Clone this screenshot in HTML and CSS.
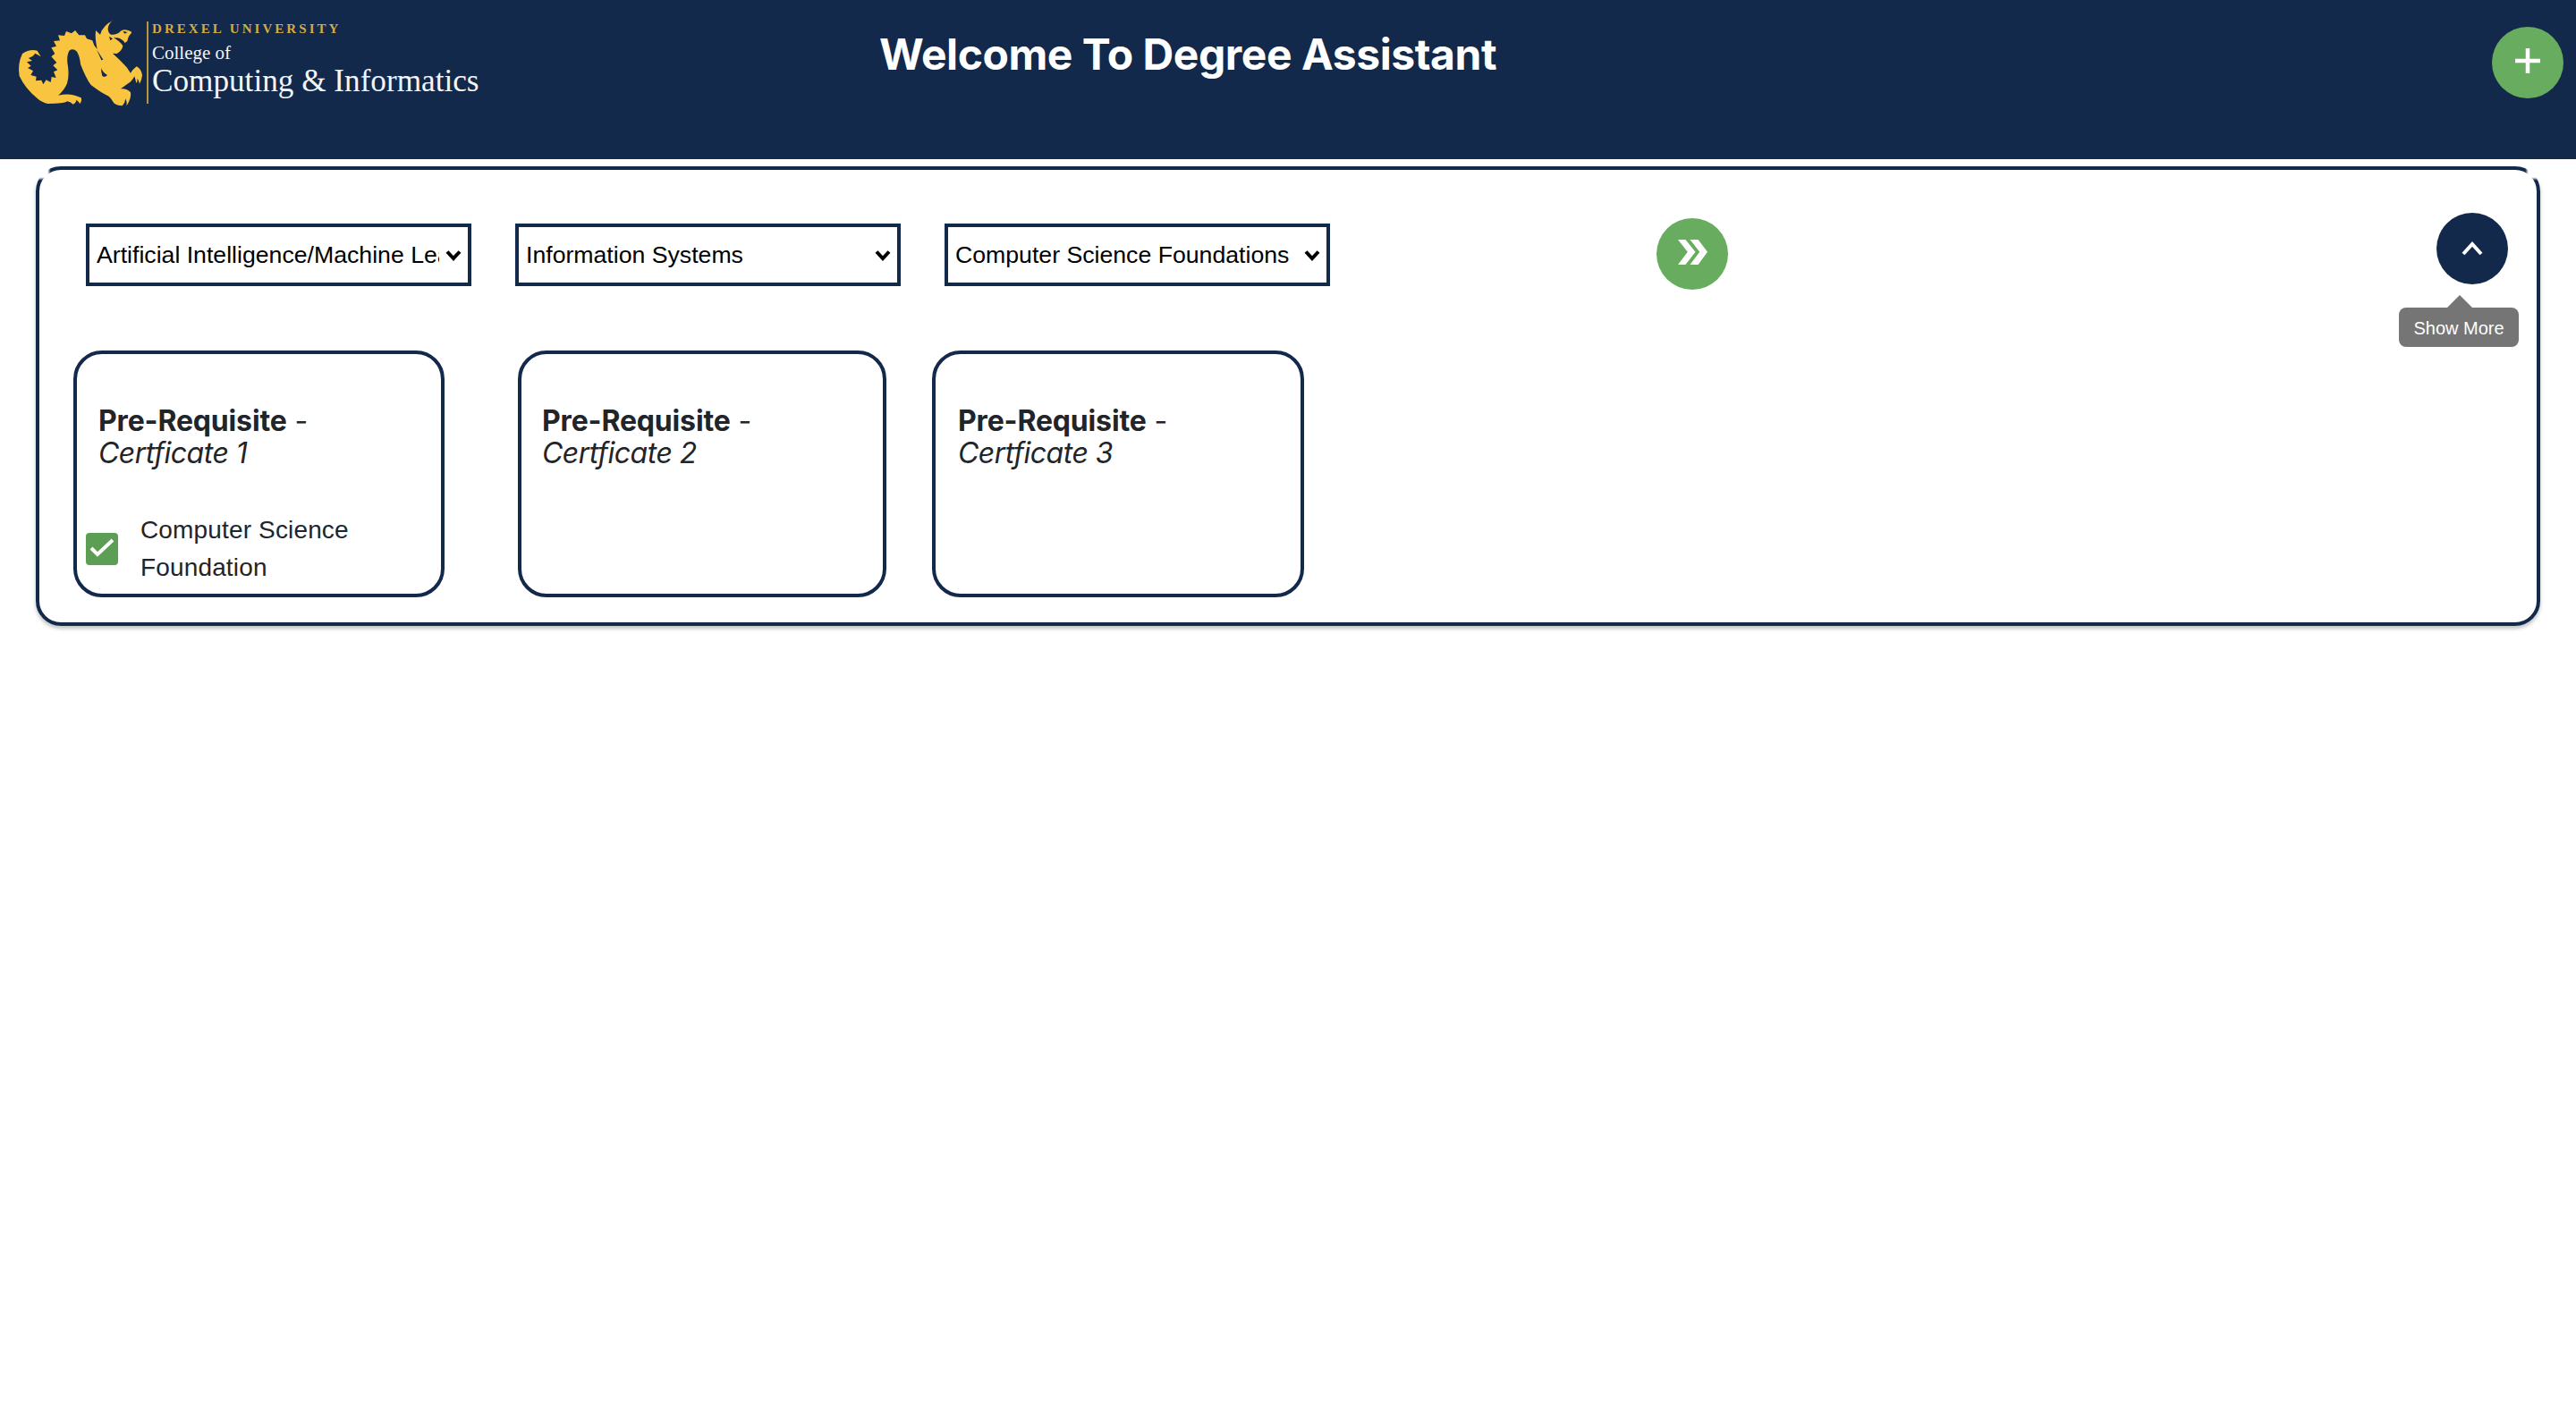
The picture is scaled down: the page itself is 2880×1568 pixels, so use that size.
FILE: index.html
```html
<!DOCTYPE html>
<html lang="en">
<head>
<meta charset="utf-8">
<title>Degree Assistant</title>
<link rel="stylesheet" href="styles.css">
</head>
<body>
<header class="topbar">
  <div class="brand">
    <svg class="dragon" viewBox="0 0 510 345" aria-hidden="true">
      <path fill="#f9c440" d="M382 37Q364 47 362 66Q362 80 372 86Q392 88 404 75Q415 64 440 76L441 81Q430 90 427 108L419 114Q410 100 394 97L381 97Q402 108 412 124Q410 140 392 150L378 149Q402 170 425 196L438 215Q446 202 458 193Q473 200 477 222Q476 238 468 251Q466 240 461 233Q462 242 457 249Q454 235 451 226Q442 243 430 250L405 268Q425 266 438 280Q442 297 425 325Q426 310 421 301Q420 315 410 325Q392 325 382 316L372 301L365 293Q340 282 305 255Q288 232 270 185Q268 160 258 143Q245 130 232 140Q224 155 226 180Q234 220 225 250Q216 272 196 290Q236 280 272 298Q276 308 268 318Q264 310 256 305Q256 314 245 320Q238 312 226 310Q214 318 160 318Q138 312 125 300Q85 268 65 225Q58 185 75 150Q100 133 125 140L137 160L118 149L110 158L96 165L108 174L90 178L104 191L93 198L111 208L103 222L122 227L120 241L139 239L145 253L155 238L170 246L173 228L188 231L180 211L193 205L178 190L190 180L172 160L184 150L172 130L189 125L180 108L201 106L195 88L216 90L222 75L240 82L252 72L265 88L285 88L291 100L310 106L316 122L326 135Q318 100 321 72L336 86Q344 56 382 37Z"/>
      <path fill="#12294b" d="M340 198Q343 212 360 222Q350 232 343 224Q338 212 340 198ZM412 74L428 78L418 83ZM366 92L378 100L370 106ZM324 136L346 170L340 172Z"/>
    </svg>
    <div class="brand-rule"></div>
    <div class="brand-text">
      <div class="brand-uni">DREXEL UNIVERSITY</div>
      <div class="brand-college">College of</div>
      <div class="brand-name">Computing &amp; Informatics</div>
    </div>
  </div>
  <h1 class="title">Welcome To Degree Assistant</h1>
  <button class="round round-green add" type="button" aria-label="Add">
    <svg viewBox="0 0 28 28" class="plus"><path d="M14 0V28M0 14H28"/></svg>
  </button>
</header>
<main class="panel">
  <div class="controls">
    <select class="picker"><option>Artificial Intelligence/Machine Learning</option></select>
    <select class="picker"><option>Information Systems</option></select>
    <select class="picker"><option>Computer Science Foundations</option></select>
    <button class="round round-green forward" type="button" aria-label="Next">
      <svg viewBox="0 0 98 83" class="dbl"><path d="M0 0H25L58 41L25 83H0L32 41ZM40 0H67L98 41L67 83H40L72 41Z"/></svg>
    </button>
    <div class="more">
      <button class="round round-navy" type="button" aria-label="Show more">
        <svg viewBox="0 0 24 16" class="chev"><path d="M2 14L12 3L22 14"/></svg>
      </button>
      <div class="tip">Show More</div>
    </div>
  </div>
  <div class="cards">
    <section class="card card-a">
      <div class="card-head"><strong>Pre-Requisite</strong> -<br><em>Certficate 1</em></div>
      <div class="course">
        <span class="tick"><svg viewBox="0 0 36 36"><path d="M6 17L13 24L30 8"/></svg></span>
        <span class="course-name">Computer Science Foundation</span>
      </div>
    </section>
    <section class="card card-b">
      <div class="card-head"><strong>Pre-Requisite</strong> -<br><em>Certficate 2</em></div>
    </section>
    <section class="card card-c">
      <div class="card-head"><strong>Pre-Requisite</strong> -<br><em>Certficate 3</em></div>
    </section>
  </div>
</main>
</body>
</html>
```

FILE: styles.css
```css
* { box-sizing: border-box; }
html, body { margin: 0; padding: 0; background: #fff; }
body { height: 1568px; overflow: hidden; font-family: "Liberation Sans", Arial, sans-serif; color: #212529; }

.topbar { height: 178px; background: #12294b; display: flex; position: relative; }
.brand { display: flex; width: 983px; padding-top: 10px; align-items: flex-start; }
.dragon { width: 170px; height: 115px; flex: none; }
.brand-rule { width: 2px; height: 92px; margin: 14px 0 0 -6px; background: #b8963a; flex: none; }
.brand-text { margin: 14px 0 0 4px; font-family: "Liberation Serif", serif; color: #f4f5f7; }
.brand-uni { color: #d4ac3f; font-size: 15px; font-weight: 700; letter-spacing: 3.05px; line-height: 16px; }
.brand-college { font-size: 21px; line-height: 26px; margin-top: 6px; }
.brand-name { font-size: 35.2px; line-height: 38px; margin-top: 0; }
.title { margin: 31px 0 0 0; font: 700 48px/60px Inter, sans-serif; letter-spacing: -0.45px; color: #fff; white-space: nowrap; }

.round { width: 80px; height: 80px; border: 0; border-radius: 50%; padding: 0; display: flex; align-items: center; justify-content: center; flex: none; }
.round-green { background: #68ad5f; }
.round-navy { background: #12294b; }
.add { position: absolute; top: 30px; right: 14px; }
.plus { width: 28px; height: 28px; margin-top: -4px; }
.plus path { fill: none; stroke: #fff; stroke-width: 4.5; }
.dbl { width: 33px; height: 28px; margin-top: -4px; }
.dbl path { fill: #fff; }
.chev { width: 24px; height: 16px; margin-top: -1px; }
.chev path { fill: none; stroke: #fff; stroke-width: 4; }

.panel { margin: 8px 40px 0; height: 514px; border: 4px solid #12294b; border-radius: 28px; box-shadow: 0 3px 4px rgba(0,0,0,.25); position: relative; padding: 60px 0 0 52px; }
.panel::before, .panel::after { content: ""; position: absolute; top: -8px; width: 19px; height: 18px; background: #fff; filter: blur(1px); }
.panel::before { left: -8px; }
.panel::after { right: -8px; }
.controls { display: flex; align-items: flex-start; }
.picker { appearance: none; -webkit-appearance: none; width: 431px; height: 70px; margin-right: 49px; border: 4px solid #12294b; border-radius: 0; color: #000; font: 26.67px "Liberation Sans", Arial, sans-serif; padding: 0 32px 0 8px; flex: none; background: #fff url("data:image/svg+xml,%3Csvg xmlns='http://www.w3.org/2000/svg' viewBox='0 0 18 13'%3E%3Cpath d='M2 2.5L9 10L16 2.5' fill='none' stroke='%23000' stroke-width='4'/%3E%3C/svg%3E") no-repeat right 7px center / 18px 13px; }
.forward { margin: -6px 0 0 316px; }
.more { position: absolute; top: 48px; right: 32px; width: 80px; }
.tip { position: absolute; top: 106px; left: -42px; width: 134px; height: 44px; border-radius: 8px; background: #757575; color: #fff; font-size: 20px; line-height: 46px; text-align: center; }
.tip::before { content: ""; position: absolute; left: 54px; top: -14px; border: solid transparent; border-width: 0 14px 14px; border-bottom-color: #757575; }

.cards { display: flex; margin-top: 68px; margin-left: -14px; align-items: flex-start; }
.card { height: 276px; border: 4px solid #12294b; border-radius: 32px; flex: none; padding: 57px 25px 0; font-family: Inter, sans-serif; position: relative; }
.card-a { width: 415px; margin-right: 82px; padding-left: 24px; }
.card-b { width: 412px; margin-right: 51px; padding-left: 23px; }
.card-c { width: 416px; }
.card-head { font-size: 32px; line-height: 36px; color: #212529; }
.card-head strong { font-weight: 700; letter-spacing: -0.15px; }
.card-head em { letter-spacing: -0.5px; }
.course { display: flex; align-items: center; margin: 47px 0 0 -14px; }
.tick { width: 36px; height: 36px; border-radius: 4px; background: #5c9e54; flex: none; margin: 0 25px 0 0; }
.tick svg { display: block; width: 36px; height: 36px; }
.tick path { fill: none; stroke: #fff; stroke-width: 4; }
.course-name { font: 28px/42px "Liberation Sans", Arial, sans-serif; letter-spacing: 0.15px; width: 300px; }
```
